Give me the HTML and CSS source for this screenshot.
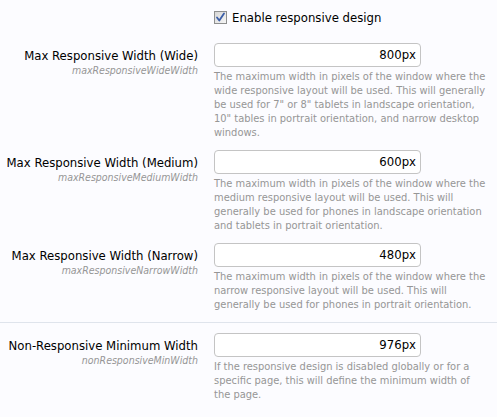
FILE: index.html
```html
<!DOCTYPE html>
<html>
<head>
<meta charset="utf-8">
<link rel="stylesheet" href="styles.css">
</head>
<body>
<div class="form">
  <div class="check-row">
    <label class="check">
      <span class="box"><svg width="11" height="11" viewBox="0 0 11 11"><path d="M2 5.5 L4.3 8.5 L9 1.5" fill="none" stroke="#3b5ea8" stroke-width="1.8" stroke-linecap="round" stroke-linejoin="round"/></svg></span>
      <span>Enable responsive design</span>
    </label>
  </div>

  <div class="row">
    <div class="label">
      <div class="name">Max Responsive Width (Wide)</div>
      <div class="hint">maxResponsiveWideWidth</div>
    </div>
    <div class="ctrl">
      <div class="input">800px</div>
      <p class="desc">The maximum width in pixels of the window where the wide responsive layout will be used. This will generally be used for 7" or 8" tablets in landscape orientation, 10" tables in portrait orientation, and narrow desktop windows.</p>
    </div>
  </div>

  <div class="row">
    <div class="label">
      <div class="name">Max Responsive Width (Medium)</div>
      <div class="hint">maxResponsiveMediumWidth</div>
    </div>
    <div class="ctrl">
      <div class="input">600px</div>
      <p class="desc">The maximum width in pixels of the window where the medium responsive layout will be used. This will generally be used for phones in landscape orientation and tablets in portrait orientation.</p>
    </div>
  </div>

  <div class="row">
    <div class="label">
      <div class="name">Max Responsive Width (Narrow)</div>
      <div class="hint">maxResponsiveNarrowWidth</div>
    </div>
    <div class="ctrl">
      <div class="input">480px</div>
      <p class="desc">The maximum width in pixels of the window where the narrow responsive layout will be used. This will generally be used for phones in portrait orientation.</p>
    </div>
  </div>

  <div class="row divided">
    <div class="label">
      <div class="name">Non-Responsive Minimum Width</div>
      <div class="hint">nonResponsiveMinWidth</div>
    </div>
    <div class="ctrl">
      <div class="input">976px</div>
      <p class="desc">If the responsive design is disabled globally or for a specific page, this will define the minimum width of the page.</p>
    </div>
  </div>
</div>
</body>
</html>
```

FILE: styles.css
```css
html, body {
  margin: 0;
  padding: 0;
  background: #fcfcff;
}
body {
  font-family: "DejaVu Sans Condensed", "DejaVu Sans", sans-serif;
  color: #000;
}
.form {
  padding-top: 11px;
}
.check-row {
  padding-left: 214px;
  height: 32px;
}
.check {
  display: flex;
  align-items: center;
  gap: 5px;
  font-size: 13px;
  line-height: 13px;
}
.box {
  width: 11px;
  height: 11px;
  border: 1px solid #8e8f8f;
  background: linear-gradient(135deg, #d6d6d6, #f6f6f6);
  display: flex;
  align-items: center;
  justify-content: center;
}
.row {
  display: grid;
  grid-template-columns: 198px 275px;
  column-gap: 16px;
  padding-bottom: 10px;
}
.row.divided {
  border-top: 1px solid #dfe4ec;
  padding-top: 10px;
}
.label {
  text-align: right;
  padding-top: 5px;
}
.name {
  font-size: 13px;
  line-height: 16px;
}
.hint {
  font-size: 10.5px;
  line-height: 13px;
  font-style: italic;
  color: #969696;
}
.input {
  box-sizing: border-box;
  width: 207px;
  height: 24px;
  border: 1px solid #c4c4c4;
  border-radius: 4px;
  background: #fff;
  font-size: 13px;
  line-height: 22px;
  text-align: right;
  padding-right: 4px;
  color: #000;
}
.desc {
  margin: 3px 0 0;
  font-size: 11px;
  line-height: 14px;
  color: #969696;
}
```
